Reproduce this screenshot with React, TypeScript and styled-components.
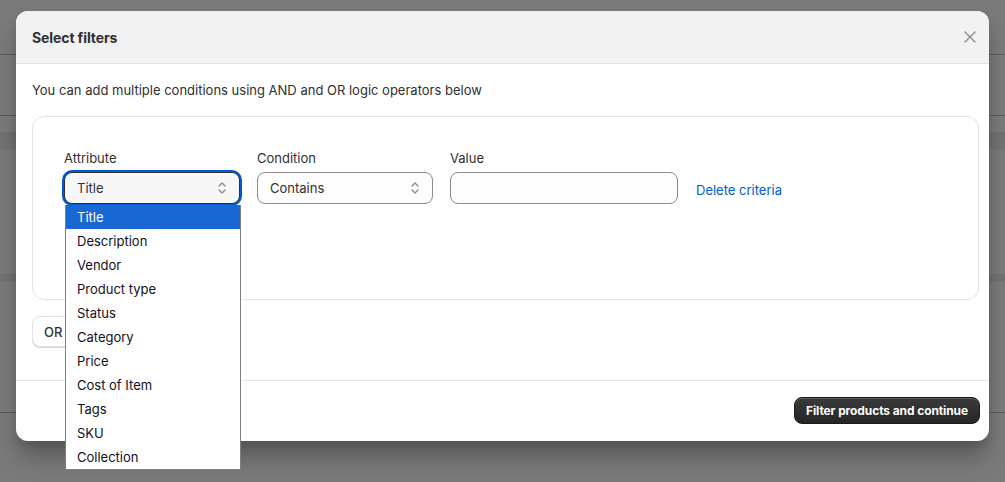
import styled, { createGlobalStyle } from 'styled-components'
import { useState } from 'react'

const GlobalStyle = createGlobalStyle`
  html, body {
    margin: 0;
    padding: 0;
    width: 100%;
    height: 100%;
    overflow: hidden;
  }
  body {
    font-family: Inter, "Noto Sans", "Liberation Sans", sans-serif;
    color: #303030;
    background: #7a7a7a;
  }
`

const Page = styled.div`
  position: relative;
  width: 1005px;
  height: 482px;
  overflow: hidden;
  background: #7a7a7a;
`

// dimmed page behind the modal
const Backdrop = styled.div`
  display: flex;
  flex-direction: column;
  width: 100%;
`

const BackRow = styled.div<{ $h: number; $line?: boolean; $tone?: string }>`
  height: ${p => p.$h}px;
  background: ${p => p.$tone || '#7a7a7a'};
  border-bottom: ${p => (p.$line ? '1px solid #5c5c5c' : 'none')};
`

const Modal = styled.div`
  position: absolute;
  top: 11px;
  left: 16px;
  width: 973px;
  height: 430px;
  background: #ffffff;
  border-radius: 12px;
  display: flex;
  flex-direction: column;
  box-shadow: 0 20px 24px -4px rgba(0, 0, 0, 0.25), 0 6px 12px rgba(0, 0, 0, 0.12);
`

const Header = styled.div`
  height: 52px;
  flex: none;
  background: #f2f2f2;
  border-bottom: 1px solid #e3e3e3;
  border-radius: 12px 12px 0 0;
  display: flex;
  align-items: center;
  justify-content: space-between;
  padding: 0 5px 0 16px;
`

const Title = styled.h2`
  margin: 0;
  font-size: 14px;
  font-weight: 650;
  color: #303030;
  letter-spacing: -0.1px;
`

const CloseButton = styled.button`
  width: 28px;
  height: 28px;
  border: none;
  background: transparent;
  display: flex;
  align-items: center;
  justify-content: center;
  padding: 0;
  cursor: pointer;
`

const Body = styled.div`
  flex: 1;
  padding: 16px 10px 0 16px;
  display: flex;
  flex-direction: column;
  gap: 16px;
`

const Intro = styled.p`
  margin: 0;
  font-size: 13px;
  line-height: 20px;
  color: #303030;
`

const Card = styled.div`
  height: 184px;
  box-sizing: border-box;
  border: 1px solid #e3e3e3;
  border-radius: 12px;
  padding: 31px 31px;
`

const CriteriaRow = styled.div`
  display: flex;
  align-items: flex-end;
  gap: 17px;
`

const Field = styled.div`
  position: relative;
  display: flex;
  flex-direction: column;
  gap: 4px;
`

const Label = styled.label`
  font-size: 13px;
  line-height: 20px;
  color: #303030;
`

const SelectBox = styled.div<{ $focused?: boolean; $w: number }>`
  width: ${p => p.$w}px;
  height: 32px;
  box-sizing: border-box;
  border: 1px solid ${p => (p.$focused ? '#303030' : '#8a8a8a')};
  border-radius: 8px;
  background: ${p => (p.$focused ? '#f7f7f7' : '#fdfdfd')};
  box-shadow: ${p => (p.$focused ? '0 0 0 2px #005bd3' : 'none')};
  display: flex;
  align-items: center;
  justify-content: space-between;
  padding: 0 11px 0 12px;
  font-size: 13px;
  color: #303030;
`

const Chevrons = styled.svg`
  width: 12px;
  height: 14px;
`

const Input = styled.input`
  width: 228px;
  height: 32px;
  box-sizing: border-box;
  border: 1px solid #8a8a8a;
  border-radius: 8px;
  background: #fdfdfd;
  outline: none;
  padding: 0 12px;
  font: inherit;
  font-size: 13px;
`

const DeleteLink = styled.button`
  border: none;
  background: transparent;
  padding: 0;
  margin: 0 0 4px 1px;
  font: inherit;
  font-size: 13px;
  line-height: 20px;
  color: #005bd3;
  cursor: pointer;
`

const OptionList = styled.ul`
  position: absolute;
  top: 57px;
  left: 1px;
  z-index: 5;
  width: 176px;
  box-sizing: border-box;
  margin: 0;
  padding: 0;
  list-style: none;
  background: #ffffff;
  border: 1px solid #7f7f7f;
  border-top: none;
`

const Option = styled.li<{ $active?: boolean }>`
  height: 24px;
  line-height: 24px;
  padding: 0 11px;
  font-size: 13px;
  color: ${p => (p.$active ? '#ffffff' : '#111122')};
  background: ${p => (p.$active ? '#1967d2' : 'transparent')};
`

const LogicRow = styled.div`
  display: flex;
  gap: 8px;
`

const LogicButton = styled.button`
  height: 31px;
  width: 60px;
  text-align: left;
  padding: 0 11px;
  border: 1px solid #e3e3e3;
  border-radius: 8px;
  background: #ffffff;
  box-shadow: 0 1px 0 #d4d4d4;
  font: inherit;
  font-size: 13px;
  font-weight: 550;
  color: #303030;
`

const Footer = styled.div`
  height: 61px;
  flex: none;
  box-sizing: border-box;
  border-top: 1px solid #e3e3e3;
  display: flex;
  align-items: flex-start;
  justify-content: flex-end;
  padding: 16px 9px 0 16px;
`

const PrimaryButton = styled.button`
  height: 27px;
  padding: 0 11px;
  border: 1px solid #1a1a1a;
  border-radius: 8px;
  background: linear-gradient(#3a3a3a, #262626);
  box-shadow: inset 0 1px 0 rgba(255, 255, 255, 0.18);
  font: inherit;
  font-size: 12px;
  font-weight: 650;
  letter-spacing: -0.1px;
  color: #ffffff;
  cursor: pointer;
`

const attributes = [
  'Title',
  'Description',
  'Vendor',
  'Product type',
  'Status',
  'Category',
  'Price',
  'Cost of Item',
  'Tags',
  'SKU',
  'Collection',
]

function UpDown() {
  return (
    <Chevrons viewBox="0 0 12 14" fill="none" stroke="#8a8a8a" strokeWidth="1.4" strokeLinecap="round" strokeLinejoin="round">
      <path d="M3 5 L6 2 L9 5" />
      <path d="M3 9 L6 12 L9 9" />
    </Chevrons>
  )
}

export default function App() {
  const [selected] = useState<number>(0)

  return (
    <Page>
      <GlobalStyle />
      <Backdrop>
        <BackRow $h={54} $line />
        <BackRow $h={60} $line />
        <BackRow $h={16} />
        <BackRow $h={17} $tone="#727272" />
        <BackRow $h={125} />
        <BackRow $h={8} $tone="#727272" />
        <BackRow $h={130} $line />
      </Backdrop>

      <Modal>
        <Header>
          <Title>Select filters</Title>
          <CloseButton aria-label="Close">
            <svg width="12" height="12" viewBox="0 0 12 12" stroke="#8a8a8a" strokeWidth="1.4" strokeLinecap="round">
              <path d="M1 1 L11 11 M11 1 L1 11" />
            </svg>
          </CloseButton>
        </Header>

        <Body>
          <Intro>You can add multiple conditions using AND and OR logic operators below</Intro>

          <Card>
            <CriteriaRow>
              <Field>
                <Label>Attribute</Label>
                <SelectBox $focused $w={176}>
                  {attributes[selected]}
                  <UpDown />
                </SelectBox>
                <OptionList>
                  {attributes.map((item, index) => (
                    <Option key={item} $active={index === selected}>{item}</Option>
                  ))}
                </OptionList>
              </Field>
              <Field>
                <Label>Condition</Label>
                <SelectBox $w={176}>
                  Contains
                  <UpDown />
                </SelectBox>
              </Field>
              <Field>
                <Label>Value</Label>
                <Input />
              </Field>
              <DeleteLink>Delete criteria</DeleteLink>
            </CriteriaRow>
          </Card>

          <LogicRow>
            <LogicButton>OR</LogicButton>
          </LogicRow>
        </Body>

        <Footer>
          <PrimaryButton>Filter products and continue</PrimaryButton>
        </Footer>
      </Modal>
    </Page>
  )
}
